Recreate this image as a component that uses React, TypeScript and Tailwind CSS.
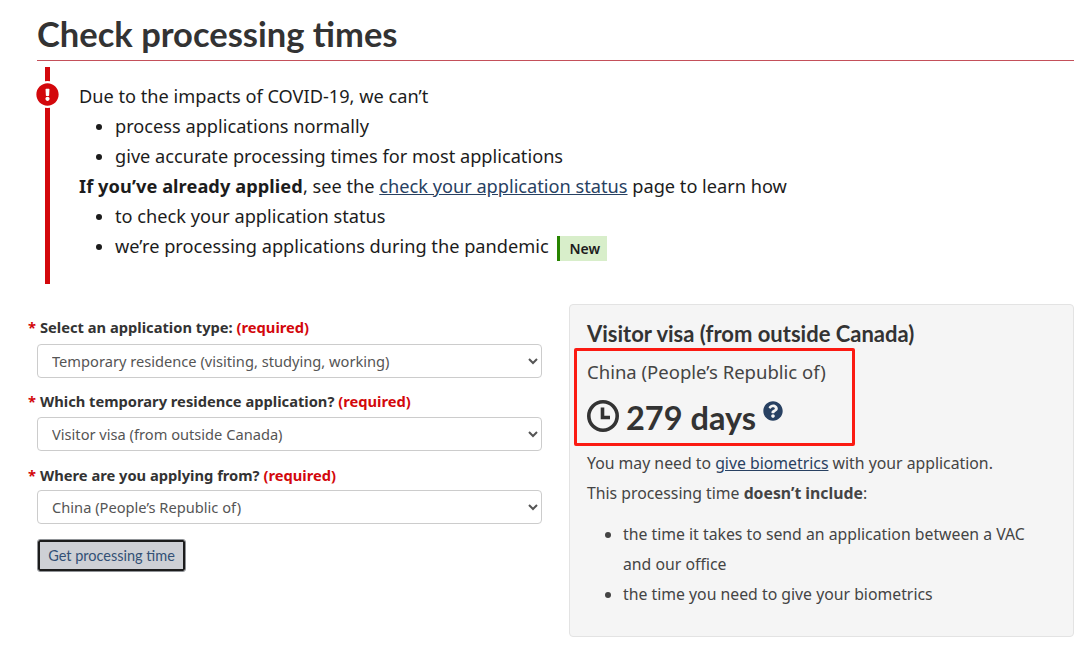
import { FaExclamationCircle, FaQuestionCircle } from "react-icons/fa";

const noto = { fontFamily: '"Noto Sans", sans-serif' };

function Field({
  label,
  value,
  className,
  selectClass,
}: {
  label: string;
  value: string;
  className?: string;
  selectClass: string;
}) {
  return (
    <div className={className}>
      <label className="relative block h-[21px] pl-[3px] text-[14.7px] leading-[21px] font-bold text-[#333333] whitespace-nowrap">
        <span className="absolute -left-[9px] top-0 text-[#d3080c]">*</span>
        {label} <span className="text-[#d3080c]">(required)</span>
      </label>
      <select
        defaultValue={value}
        className={`${selectClass} block h-[34px] w-full rounded-[4px] border border-[#cccccc] bg-white pl-[10px] text-[14.65px] text-[#555555]`}
      >
        <option>{value}</option>
      </select>
    </div>
  );
}

export default function App() {
  return (
    <div
      className="relative h-[647px] w-[1080px] overflow-hidden bg-white pl-[37px] pr-[6px] text-[#333333]"
      style={noto}
    >
      <h1 className="h-[61px] border-b border-[#c4505a] pt-[12px] font-['Lato',sans-serif] text-[34.5px] leading-[44px] font-bold text-[#333333]">
        Check processing times
      </h1>

      {/* alert */}
      <section className="relative mt-[6px] ml-[8px] h-[217px] border-l-[5px] border-[#d3080c] pl-[29px] pt-[14px] text-[18.2px] leading-[30px] text-[#1c1c1c]">
        <span className="absolute -left-[16px] top-[14px] flex h-[27px] w-[27px] items-center justify-center rounded-full bg-white">
          <FaExclamationCircle className="h-[23px] w-[23px] text-[#d3080c]" />
        </span>
        <p>Due to the impacts of COVID-19, we can’t</p>
        <ul className="list-disc pl-[36px]">
          <li>process applications normally</li>
          <li>give accurate processing times for most applications</li>
        </ul>
        <p>
          <strong className="tracking-[0.08px]">If you’ve already applied</strong>, see the{" "}
          <a href="#" className="text-[#284162] underline">
            check your application status
          </a>{" "}
          page to learn how
        </p>
        <ul className="list-disc pl-[36px]">
          <li>to check your application status</li>
          <li>
            we’re processing applications during the pandemic{" "}
            <span className="ml-[4px] inline-block h-[25px] border-l-[3px] border-[#278400] bg-[#d8eeca] pl-[9px] pr-[7px] align-[-1px] text-[14px] leading-[25px] font-semibold text-[#1c1c1c]">
              New
            </span>
          </li>
        </ul>
      </section>

      <div className="mt-[20px] flex items-start gap-[27px]">
        <form className="w-[505px] shrink-0 pt-[13px]">
          <Field
            selectClass="mt-[6px]"
            label="Select an application type:"
            value="Temporary residence (visiting, studying, working)"
          />
          <Field
            className="mt-[13px]"
            selectClass="mt-[5px]"
            label="Which temporary residence application?"
            value="Visitor visa (from outside Canada)"
          />
          <Field
            className="mt-[14px]"
            selectClass="mt-[4px]"
            label="Where are you applying from?"
            value="China (People’s Republic of)"
          />
          <button
            type="button"
            className="mt-[16px] ml-[1px] block h-[31px] w-[147px] rounded-[2px] border-2 border-[#1c1c1c] bg-[#ced0d5] font-['Lato',sans-serif] text-[14.5px] text-[#335075] outline outline-1 outline-[#8f9296]"
          >
            Get processing time
          </button>
        </form>

        <aside className="h-[333px] w-[505px] rounded-[4px] border border-[#e3e3e3] bg-[#f5f5f5] pl-[17px] pt-[14px] text-[15.8px] leading-[30px] text-[#444444]">
          <h2 className="font-['Lato',sans-serif] text-[22px] leading-[30px] font-bold text-[#333333]">
            Visitor visa (from outside Canada)
          </h2>
          <p className="mt-[8px] text-[18.5px] leading-[30px]">China (People’s Republic of)</p>
          <div className="mt-[9px] flex h-[43px] items-start font-['Lato',sans-serif] text-[32.5px] leading-[43px] font-bold text-[#333333]">
            <svg viewBox="0 0 32 32" className="mt-[4px] mr-[7px] h-[32px] w-[32px]" fill="none" stroke="#333333" strokeWidth="3.6">
              <circle cx="16" cy="16" r="14.2" />
              <path d="M15.5 7.5V17.5H23" />
            </svg>
            279 days
            <FaQuestionCircle className="mt-[5px] ml-[7px] h-[20px] w-[20px] text-[#284162]" />
          </div>
          <p className="mt-[9px]">
            You may need to{" "}
            <a href="#" className="text-[#284162] underline">
              give biometrics
            </a>{" "}
            with your application.
          </p>
          <p>
            This processing time <strong>doesn’t include</strong>:
          </p>
          <ul className="mt-[11px] w-[450px] list-disc pl-[36px]">
            <li>the time it takes to send an application between a VAC and our office</li>
            <li>the time you need to give your biometrics</li>
          </ul>
        </aside>
      </div>

      {/* red annotation drawn over the screenshot */}
      <div className="pointer-events-none absolute left-[574px] top-[348px] h-[98px] w-[281px] rounded-[2px] border-[3px] border-[#fb1a12]" />
    </div>
  );
}
